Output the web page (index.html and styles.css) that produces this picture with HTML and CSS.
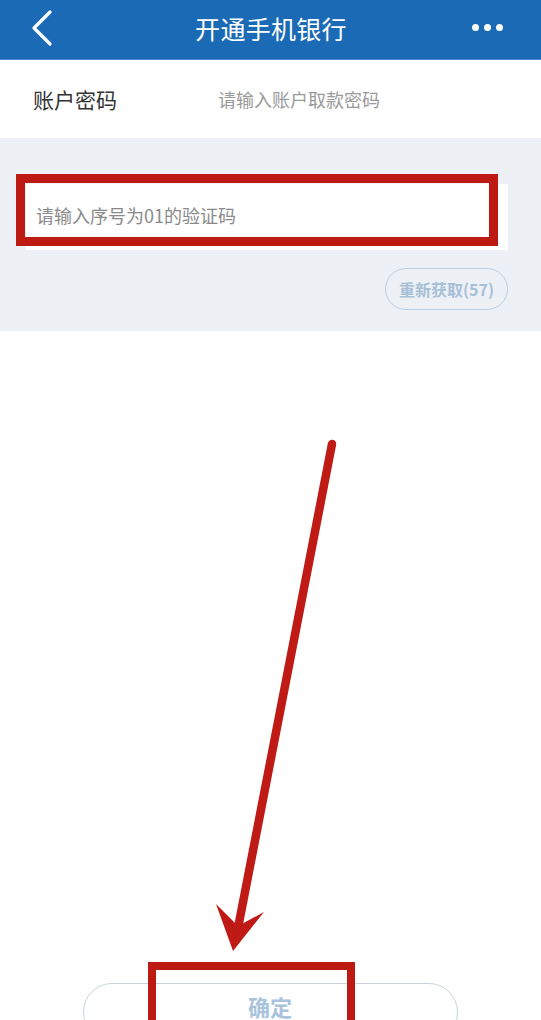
FILE: index.html
```html
<!DOCTYPE html>
<html lang="zh-CN">
<head>
<meta charset="utf-8">
<title>开通手机银行</title>
<link rel="stylesheet" href="styles.css">
</head>
<body>
<div class="page">
  <header class="topbar">
    <svg class="back" width="30" height="40" viewBox="0 0 30 40"><polyline points="20,4 4,20 20,36" fill="none" stroke="#fff" stroke-width="3.2" stroke-linecap="round" stroke-linejoin="round"/></svg>
    <h1 class="title">开通手机银行</h1>
    <div class="more"><span></span><span></span><span></span></div>
  </header>

  <div class="row">
    <span class="label">账户密码</span>
    <span class="placeholder">请输入账户取款密码</span>
  </div>

  <section class="verify">
    <div class="input-wrap">
      <div class="input">请输入序号为01的验证码</div>
      <div class="mark mark-input"></div>
    </div>
    <div class="resend-row">
      <button class="resend">重新获取(57)</button>
    </div>
  </section>

  <div class="spacer"></div>

  <div class="confirm-row">
    <button class="confirm">确定</button>
    <div class="mark mark-confirm"></div>
  </div>

  <svg class="arrow" width="541" height="1020" viewBox="0 0 541 1020">
    <line x1="332" y1="444" x2="238" y2="928" stroke="#bf1a15" stroke-width="8.5" stroke-linecap="round"/>
    <polygon points="216,904 238,926 264,912 233,951" fill="#bf1a15"/>
  </svg>
</div>
</body>
</html>
```
FILE: styles.css
```css
* { box-sizing: border-box; }
html, body { margin: 0; padding: 0; }
body {
  font-family: "Noto Sans CJK SC", "Noto Sans", sans-serif;
  background: #fff;
  width: 541px;
  height: 1020px;
  overflow: hidden;
}
.page { position: relative; width: 541px; height: 1020px; overflow: hidden; }

.topbar {
  height: 60px;
  background: #1b6ab6;
  display: flex;
  align-items: center;
  justify-content: space-between;
  padding: 0 38px 0 30px;
  border-bottom: 1px solid #4d8ac6;
}
.back { display: block; margin-top: -4px; }
.title {
  margin: 0;
  font-size: 25px;
  font-weight: 400;
  color: #fff;
  letter-spacing: 0.3px;
  margin-left: 10px;
  margin-top: -3px;
}
.more { display: flex; gap: 5px; margin-top: -5px; }
.more span { width: 7px; height: 7px; border-radius: 50%; background: #fff; }

.row {
  height: 78px;
  display: flex;
  align-items: center;
  padding: 0 0 0 33px;
}
.label { font-size: 21px; color: #333; width: 185px; }
.placeholder { font-size: 18px; color: #9a9a9a; }

.verify {
  background: #edf1f6;
  padding: 46px 33px 21px 26px;
}
.input-wrap { position: relative; }
.input {
  height: 66px;
  background: #fff;
  font-size: 18px;
  color: #8a8a8a;
  padding: 0 0 0 10px;
  display: flex;
  align-items: center;
  padding-bottom: 4px;
}
.mark {
  position: absolute;
  border: 9px solid #be1a14;
}
.mark-input { left: -10px; top: -10px; width: 482px; height: 72px; }

.resend-row {
  display: flex;
  justify-content: flex-end;
  margin-top: 18px;
}
.resend {
  font-family: inherit;
  height: 42px;
  width: 123px;
  border: 1.5px solid #bccfe0;
  border-radius: 21px;
  background: transparent;
  color: #a7bfd7;
  font-size: 16px;
  font-weight: 700;
  padding: 0;
}

.spacer { height: 652px; }

.confirm-row { position: relative; display: flex; justify-content: center; }
.confirm {
  font-family: inherit;
  width: 375px;
  height: 58px;
  margin-left: -1px;
  border: 1.5px solid #c7d4df;
  border-radius: 29px;
  background: #fff;
  color: #a9c3dc;
  font-size: 22px;
  font-weight: 700;
  padding: 0 0 12px;
  line-height: 1;
}
.mark-confirm { left: 148px; top: -21px; width: 207px; height: 120px; border-width: 8.5px; }

.arrow { position: absolute; left: 0; top: 0; pointer-events: none; }
```
